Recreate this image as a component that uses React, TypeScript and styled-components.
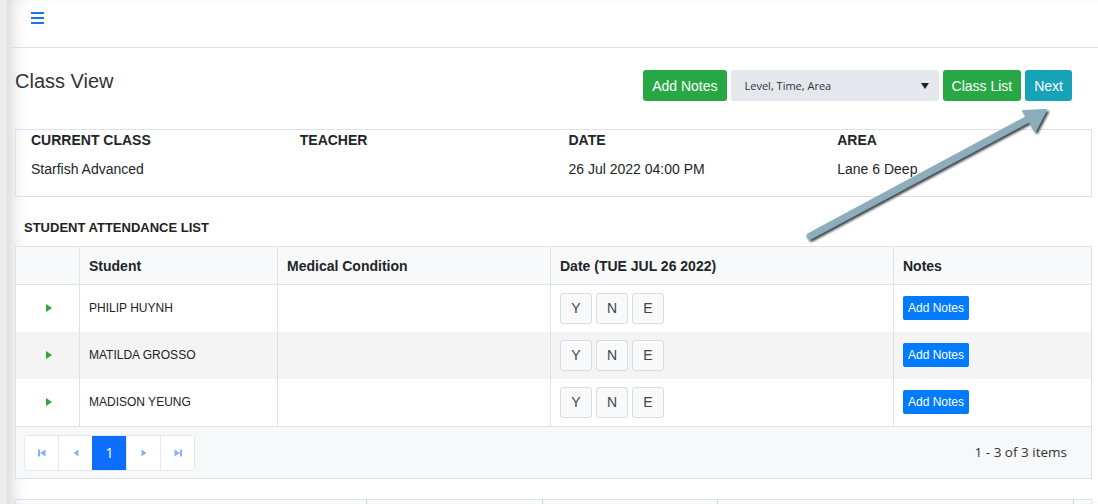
import React from "react";
import styled, { createGlobalStyle } from "styled-components";

const GlobalStyle = createGlobalStyle`
  html, body {
    margin: 0;
    padding: 0;
    background: #ececec;
    font-family: "Liberation Sans", Arial, sans-serif;
    color: #212529;
  }
`;

const Page = styled.div`
  position: relative;
  padding-left: 7px;
  height: 504px;
  overflow: hidden;
`;

const Panel = styled.div`
  background: #fff;
  box-shadow: inset 14px 0 18px -10px rgba(0, 0, 0, 0.18);
  height: 100%;
`;

const TopBar = styled.div`
  height: 48px;
  border-bottom: 1px solid #dee2e6;
  display: flex;
  align-items: flex-start;
  padding: 12px 0 0 24px;
  box-sizing: border-box;
`;

const Burger = styled.button`
  border: none;
  background: none;
  padding: 0;
  width: 13px;
  display: flex;
  flex-direction: column;
  gap: 3px;
  cursor: pointer;
  span {
    display: block;
    height: 2px;
    background: #1a73f0;
  }
`;

const Content = styled.div`
  padding: 0 6px 0 8px;
`;

const HeaderRow = styled.div`
  display: flex;
  justify-content: space-between;
  align-items: flex-start;
  padding-top: 21px;
`;

const Title = styled.h1`
  margin: 0;
  font-weight: 400;
  font-size: 20px;
  line-height: 24px;
  color: #333;
`;

const Actions = styled.div`
  display: flex;
  gap: 4px;
  margin-right: 20px;
  padding-top: 1px;
`;

const Btn = styled.button<{ variant: "green" | "teal" }>`
  height: 31px;
  border: none;
  border-radius: 3px;
  padding: 0 9px;
  font-family: "Liberation Sans", Arial, sans-serif;
  font-size: 14px;
  color: #fff;
  background: ${({ variant }) => (variant === "green" ? "#28a745" : "#17a2b8")};
  cursor: pointer;
`;

const Select = styled.div`
  width: 208px;
  height: 31px;
  border-radius: 3px;
  background: #e4e7eb;
  display: flex;
  align-items: center;
  justify-content: space-between;
  padding: 0 10px 0 14px;
  box-sizing: border-box;
  font-family: "Open Sans", "Noto Sans", sans-serif;
  font-size: 11px;
  color: #333;
  span.caret {
    width: 0;
    height: 0;
    border-left: 4px solid transparent;
    border-right: 4px solid transparent;
    border-top: 6px solid #222;
  }
`;

const InfoCard = styled.div`
  margin-top: 28px;
  border: 1px solid #dee2e6;
  display: grid;
  grid-template-columns: repeat(4, 1fr);
  height: 68px;
  box-sizing: border-box;
`;

const InfoCell = styled.div`
  padding: 1px 15px 0;
`;

const InfoLabel = styled.div`
  font-weight: 700;
  font-size: 14px;
  line-height: 18px;
  text-transform: uppercase;
  color: #212529;
`;

const InfoValue = styled.div`
  margin-top: 11px;
  font-size: 14px;
  line-height: 18px;
  color: #212529;
`;

const SectionTitle = styled.h2`
  margin: 23px 0 10px 9px;
  font-size: 13px;
  line-height: 16px;
  font-weight: 700;
  text-transform: uppercase;
  color: #222;
`;

const Grid = styled.table`
  width: 100%;
  border-collapse: collapse;
  border: 1px solid #dee2e6;
  table-layout: fixed;
`;

const HeadCell = styled.th`
  height: 37px;
  background: #f8f9fa;
  border: 1px solid #dee2e6;
  text-align: left;
  padding: 0 9px;
  font-size: 14px;
  font-weight: 700;
  color: #212529;
`;

const Row = styled.tr<{ striped?: boolean }>`
  background: ${({ striped }) => (striped ? "#f4f4f4" : "#fff")};
  height: 47.2px;
`;

const Cell = styled.td`
  border-left: 1px solid #dee2e6;
  border-right: 1px solid #dee2e6;
  padding: 0 9px;
  font-size: 12px;
  color: #222;
  vertical-align: middle;
`;

const ExpandCell = styled(Cell)`
  text-align: center;
  span {
    display: inline-block;
    width: 0;
    height: 0;
    border-top: 4px solid transparent;
    border-bottom: 4px solid transparent;
    border-left: 6px solid #28a745;
    margin-left: 2px;
  }
`;

const Toggles = styled.div`
  display: flex;
  gap: 4px;
`;

const Toggle = styled.button`
  width: 32px;
  height: 31px;
  border: 1px solid #dcdcdc;
  border-radius: 3px;
  background: #f8f9fa;
  font-family: "Liberation Sans", Arial, sans-serif;
  font-size: 14px;
  color: #444;
  padding: 0;
`;

const NoteBtn = styled.button`
  height: 24px;
  border: none;
  border-radius: 2px;
  background: #007bff;
  color: #fff;
  font-family: "Liberation Sans", Arial, sans-serif;
  font-size: 12px;
  padding: 0 5px;
`;

const Footer = styled.div`
  height: 52px;
  background: #f7f8fa;
  border: 1px solid #dee2e6;
  border-top: none;
  display: flex;
  align-items: flex-start;
  justify-content: space-between;
  padding: 8px 24px 0 8px;
  box-sizing: border-box;
`;

const Pager = styled.div`
  display: flex;
  border: 1px solid #e4e7eb;
  border-radius: 4px;
  background: #fff;
  overflow: hidden;
`;

const PageBtn = styled.div<{ active?: boolean }>`
  width: 34px;
  height: 34px;
  box-sizing: border-box;
  display: flex;
  align-items: center;
  justify-content: center;
  border-left: 1px solid ${({ active }) => (active ? "#0d6efd" : "#e4e7eb")};
  background: ${({ active }) => (active ? "#0d6efd" : "#fff")};
  color: ${({ active }) => (active ? "#fff" : "#86b3f6")};
  font-family: "Open Sans", "Noto Sans", sans-serif;
  font-size: 14px;
  &:first-child {
    border-left: none;
    width: 33px;
  }
`;

const Summary = styled.div`
  font-family: "Open Sans", "Noto Sans", sans-serif;
  font-size: 13.5px;
  color: #333;
  line-height: 34px;
`;

const NextTable = styled.div`
  margin-top: 20px;
  height: 30px;
  border: 1px solid #dee2e6;
  display: grid;
  grid-template-columns: 350px 176px 175px 356px 1fr;
  div + div {
    border-left: 1px solid #cfd4da;
  }
`;

const Arrow = styled.svg`
  position: absolute;
  left: 790px;
  top: 95px;
  pointer-events: none;
`;

const Tri = ({ dir, bar }: { dir: "l" | "r"; bar?: boolean }) => (
  <svg width="12" height="12" viewBox="0 0 12 12">
    {dir === "l" ? (
      <>
        {bar && <rect x="2" y="2.5" width="2" height="7" fill="currentColor" />}
        <path d={bar ? "M9.5 2.5 L4 6 L9.5 9.5 Z" : "M8.5 2.5 L3.5 6 L8.5 9.5 Z"} fill="currentColor" />
      </>
    ) : (
      <>
        <path d={bar ? "M2.5 2.5 L8 6 L2.5 9.5 Z" : "M3.5 2.5 L8.5 6 L3.5 9.5 Z"} fill="currentColor" />
        {bar && <rect x="8" y="2.5" width="2" height="7" fill="currentColor" />}
      </>
    )}
  </svg>
);

const students = ["PHILIP HUYNH", "MATILDA GROSSO", "MADISON YEUNG"];

export default function App() {
  return (
    <Page>
      <GlobalStyle />
      <Panel>
        <TopBar>
          <Burger aria-label="menu">
            <span />
            <span />
            <span />
          </Burger>
        </TopBar>
        <Content>
          <HeaderRow>
            <Title>Class View</Title>
            <Actions>
              <Btn variant="green">Add Notes</Btn>
              <Select>
                <span>Level, Time, Area</span>
                <span className="caret" />
              </Select>
              <Btn variant="green">Class List</Btn>
              <Btn variant="teal">Next</Btn>
            </Actions>
          </HeaderRow>

          <InfoCard>
            <InfoCell>
              <InfoLabel>Current Class</InfoLabel>
              <InfoValue>Starfish Advanced</InfoValue>
            </InfoCell>
            <InfoCell>
              <InfoLabel>Teacher</InfoLabel>
              <InfoValue />
            </InfoCell>
            <InfoCell>
              <InfoLabel>Date</InfoLabel>
              <InfoValue>26 Jul 2022 04:00 PM</InfoValue>
            </InfoCell>
            <InfoCell>
              <InfoLabel>Area</InfoLabel>
              <InfoValue>Lane 6 Deep</InfoValue>
            </InfoCell>
          </InfoCard>

          <SectionTitle>Student Attendance List</SectionTitle>

          <Grid>
            <colgroup>
              <col style={{ width: 64 }} />
              <col style={{ width: 198 }} />
              <col style={{ width: 273 }} />
              <col style={{ width: 343 }} />
              <col />
            </colgroup>
            <thead>
              <tr>
                <HeadCell />
                <HeadCell>Student</HeadCell>
                <HeadCell>Medical Condition</HeadCell>
                <HeadCell>Date (TUE JUL 26 2022)</HeadCell>
                <HeadCell>Notes</HeadCell>
              </tr>
            </thead>
            <tbody>
              {students.map((name, i) => (
                <Row key={name} striped={i === 1}>
                  <ExpandCell>
                    <span />
                  </ExpandCell>
                  <Cell>{name}</Cell>
                  <Cell />
                  <Cell>
                    <Toggles>
                      <Toggle>Y</Toggle>
                      <Toggle>N</Toggle>
                      <Toggle>E</Toggle>
                    </Toggles>
                  </Cell>
                  <Cell>
                    <NoteBtn>Add Notes</NoteBtn>
                  </Cell>
                </Row>
              ))}
            </tbody>
          </Grid>
          <Footer>
            <Pager>
              <PageBtn>
                <Tri dir="l" bar />
              </PageBtn>
              <PageBtn>
                <Tri dir="l" />
              </PageBtn>
              <PageBtn active>1</PageBtn>
              <PageBtn>
                <Tri dir="r" />
              </PageBtn>
              <PageBtn>
                <Tri dir="r" bar />
              </PageBtn>
            </Pager>
            <Summary>1 - 3 of 3 items</Summary>
          </Footer>

          <NextTable>
            <div />
            <div />
            <div />
            <div />
            <div />
          </NextTable>
        </Content>
      </Panel>

      <Arrow width="280" height="160" viewBox="0 0 280 160">
        <defs>
          <filter id="sh" x="-20%" y="-20%" width="140%" height="140%">
            <feDropShadow dx="2" dy="2" stdDeviation="1.2" floodColor="#1c2a30" floodOpacity="0.85" />
          </filter>
        </defs>
        <g filter="url(#sh)">
          <line x1="20" y1="141" x2="240" y2="23" stroke="#8eadbb" strokeWidth="7" strokeLinecap="round" />
          <path d="M256 15 L233 16 L245 36 Z" fill="#8eadbb" stroke="#8eadbb" strokeWidth="2" strokeLinejoin="round" />
        </g>
      </Arrow>
    </Page>
  );
}
